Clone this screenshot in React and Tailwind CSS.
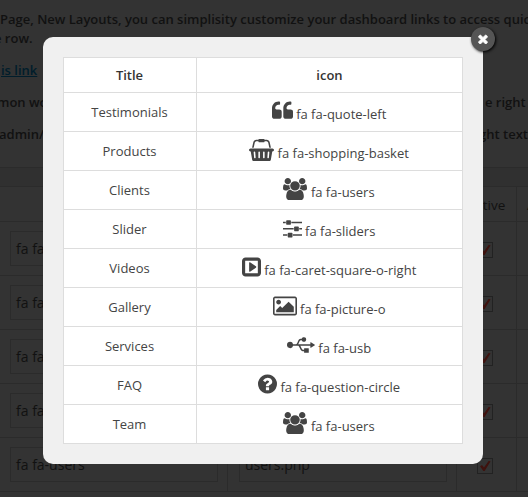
import React from "react";

const ICONS = {
  "quote-left": {
    box: "64 0 1664 1792",
    size: "w-[21px]",
    d: "M832 960v384q0 80-56 136t-136 56h-384q-80 0-136-56t-56-136v-704q0-104 40.5-198.5t109.5-163.5 163.5-109.5 198.5-40.5h64q26 0 45 19t19 45v128q0 26-19 45t-45 19h-64q-106 0-181 75t-75 181v32q0 40 28 68t68 28h224q80 0 136 56t56 136zm896 0v384q0 80-56 136t-136 56h-384q-80 0-136-56t-56-136v-704q0-104 40.5-198.5t109.5-163.5 163.5-109.5 198.5-40.5h64q26 0 45 19t19 45v128q0 26-19 45t-45 19h-64q-106 0-181 75t-75 181v32q0 40 28 68t68 28h224q80 0 136 56t56 136z",
  },
  "shopping-basket": {
    box: "0 0 2048 1792",
    size: "w-[25px]",
    d: "M1920 768q53 0 90.5 37.5t37.5 90.5-37.5 90.5-90.5 37.5h-15l-115 662q-8 46-44 76t-82 30h-1280q-46 0-82-30t-44-76l-115-662h-15q-53 0-90.5-37.5t-37.5-90.5 37.5-90.5 90.5-37.5h1792zm-1435 800q26-2 43.5-22.5t15.5-46.5l-32-416q-2-26-22.5-43.5t-46.5-15.5-43.5 22.5-15.5 46.5l32 416q2 25 20.5 42t43.5 17h5zm411-64v-416q0-26-19-45t-45-19-45 19-19 45v416q0 26 19 45t45 19 45-19 19-45zm384 0v-416q0-26-19-45t-45-19-45 19-19 45v416q0 26 19 45t45 19 45-19 19-45zm352 5l32-416q2-26-15.5-46.5t-43.5-22.5-46.5 15.5-22.5 43.5l-32 416q-2 26 15.5 46.5t43.5 22.5h5q25 0 43.5-17t20.5-42zm-1156-1217l-93 412h-132l101-441q19-88 89-143.5t160-55.5h167q0-26 19-45t45-19h384q26 0 45 19t19 45h167q90 0 160 55.5t89 143.5l101 441h-132l-93-412q-11-44-45.5-72t-79.5-28h-167q0 26-19 45t-45 19h-384q-26 0-45-19t-19-45h-167q-45 0-79.5 28t-45.5 72z",
  },
  users: {
    box: "64 0 1920 1792",
    size: "w-[24px]",
    d: "M657 896q-162 5-265 128h-134q-82 0-138-40.5t-56-118.5q0-353 124-353 6 0 43.5 21t97.5 42.5 119 21.5q67 0 133-23-5 37-5 66 0 139 81 256zm1071 637q0 120-73 189.5t-194 69.5h-874q-121 0-194-69.5t-73-189.5q0-53 3.5-103.5t14-109 26.5-108.5 43-97.5 62-81 85.5-53.5 111.5-20q10 0 43 21.5t73 48 107 48 135 21.5 135-21.5 107-48 73-48 43-21.5q61 0 111.5 20t85.5 53.5 62 81 43 97.5 26.5 108.5 14 109 3.5 103.5zm-1024-1277q0 106-75 181t-181 75-181-75-75-181 75-181 181-75 181 75 75 181zm704 384q0 159-112.5 271.5t-271.5 112.5-271.5-112.5-112.5-271.5 112.5-271.5 271.5-112.5 271.5 112.5 112.5 271.5zm576 225q0 78-56 118.5t-138 40.5h-134q-103-123-265-128 81-117 81-256 0-29-5-66 66 23 133 23 59 0 119-21.5t97.5-42.5 43.5-21q124 0 124 353zm-128-609q0 106-75 181t-181 75-181-75-75-181 75-181 181-75 181 75 75 181z",
  },
  sliders: {
    box: "128 0 1536 1792",
    size: "w-[19px]",
    d: "M480 1408v128h-352v-128h352zm352-128q26 0 45 19t19 45v256q0 26-19 45t-45 19h-256q-26 0-45-19t-19-45v-256q0-26 19-45t45-19h256zm160-384v128h-864v-128h864zm-640-512v128h-224v-128h224zm1312 1024v128h-736v-128h736zm-960-1152q26 0 45 19t19 45v256q0 26-19 45t-45 19h-256q-26 0-45-19t-19-45v-256q0-26 19-45t45-19h256zm640 512q26 0 45 19t19 45v256q0 26-19 45t-45 19h-256q-26 0-45-19t-19-45v-256q0-26 19-45t45-19h256zm320 128v128h-224v-128h224zm0-512v128h-864v-128h864z",
  },
  "caret-square-o-right": {
    box: "128 0 1536 1792",
    size: "w-[19px]",
    d: "M1280 896q0 33-27 52l-448 320q-31 23-66 5-35-17-35-57v-640q0-40 35-57 35-18 66 5l448 320q27 19 27 52zm128 480v-960q0-14-9-23t-23-9h-960q-14 0-23 9t-9 23v960q0 14 9 23t23 9h960q14 0 23-9t9-23zm256-960v960q0 119-84.5 203.5t-203.5 84.5h-960q-119 0-203.5-84.5t-84.5-203.5v-960q0-119 84.5-203.5t203.5-84.5h960q119 0 203.5 84.5t84.5 203.5z",
  },
  "picture-o": {
    box: "64 0 1920 1792",
    size: "w-[24px]",
    d: "M704 576q0 80-56 136t-136 56-136-56-56-136 56-136 136-56 136 56 56 136zm1024 384v448h-1408v-192l320-320 160 160 512-512zm96-704h-1600q-13 0-22.5 9.5t-9.5 22.5v1216q0 13 9.5 22.5t22.5 9.5h1600q13 0 22.5-9.5t9.5-22.5v-1216q0-13-9.5-22.5t-22.5-9.5zm160 32v1216q0 66-47 113t-113 47h-1600q-66 0-113-47t-47-113v-1216q0-66 47-113t113-47h1600q66 0 113 47t47 113z",
  },
  usb: {
    box: "0 0 2304 1792",
    size: "w-[28px]",
    d: "M256 640a256 256 0 0 1 248 192h242c55-20 95-110 140-210 60-130 120-238 244-238h77a192 192 0 1 1 0 128h-77c-55 0-95 80-140 180-25 55-45 102-70 140h1000v-128q0-18 16-28 16-8 32 1l320 192q16 9 16 27t-16 28l-320 192q-16 9-32 0-16-9-16-28v-128H1090c30 38 52 88 76 140 46 100 86 180 140 180h102v-96q0-32 32-32h320q32 0 32 32v320q0 32-32 32h-320q-32 0-32-32v-96h-102c-124 0-184-108-244-238-45-100-85-190-140-210H504A256 256 0 1 1 256 640z",
  },
  "question-circle": {
    box: "128 0 1536 1792",
    size: "w-[19px]",
    d: "M1024 1376v-192q0-14-9-23t-23-9h-192q-14 0-23 9t-9 23v192q0 14 9 23t23 9h192q14 0 23-9t9-23zm256-672q0-88-55.5-163t-138.5-116-170-41q-243 0-371 213-15 24 8 42l132 100q7 6 19 6 16 0 25-12 53-68 86-92 34-24 86-24 48 0 85.5 26t37.5 59q0 38-20 61t-68 45q-63 28-115.5 86.5t-52.5 125.5v36q0 14 9 23t23 9h192q14 0 23-9t9-23q0-19 21.5-49.5t54.5-49.5q32-18 49-28.5t46-35 44.5-48 28-60.5 12.5-81zm384 192q0 209-103 385.5t-279.5 279.5-385.5 103-385.5-103-279.5-279.5-103-385.5 103-385.5 279.5-279.5 385.5-103 385.5 103 279.5 279.5 103 385.5z",
  },
};

const ROWS = [
  ["Testimonials", "quote-left"],
  ["Products", "shopping-basket"],
  ["Clients", "users"],
  ["Slider", "sliders"],
  ["Videos", "caret-square-o-right"],
  ["Gallery", "picture-o"],
  ["Services", "usb"],
  ["FAQ", "question-circle"],
  ["Team", "users"],
];

function Icon({ name }) {
  const icon = ICONS[name];
  return (
    <svg viewBox={icon.box} className={`h-[22px] shrink-0 ${icon.size}`} fill="#444" preserveAspectRatio="none">
      <path d={icon.d} />
    </svg>
  );
}

function Check() {
  return (
    <div className="flex size-4 items-center justify-center border border-[#222]">
      <svg viewBox="0 0 12 12" className="size-3" fill="#3f120e">
        <path d="M1 6.2 3 5l2 2.6L9.6 1 11.6 1.2 5.6 11H4.4z" />
      </svg>
    </div>
  );
}

function Page() {
  return (
    <div className="h-[497px] overflow-hidden bg-[#333] text-[13px] text-[#111]">
      <div className="h-[167px] pt-[10px] font-semibold leading-[19px] whitespace-nowrap">
        <p>Page, New Layouts, you can simplisity customize your dashboard links to access quic</p>
        <p className="-ml-[6px]">e row.</p>
        <p className="mt-[13px] pl-px text-[#001d2b] underline">is link</p>
        <p className="mt-[13px] -ml-[3px] flex">
          <span className="w-[488px]">mon wo</span>
          <span>e right</span>
        </p>
        <p className="mt-[13px] -ml-px flex">
          <span className="w-[482px]">admin/</span>
          <span>ght text</span>
        </p>
      </div>
      <div className="h-5 border-y border-[#2b2b2b] bg-[#303030]" />
      <div className="grid h-[35px] w-[576px] grid-cols-[228px_229px_60px_59px] border-b border-[#2b2b2b] text-[13.5px]">
        <div className="border-r border-[#2b2b2b]" />
        <div className="border-r border-[#2b2b2b]" />
        <div className="flex items-center justify-center border-r border-[#2b2b2b] pt-0.5">Active</div>
        <div className="flex items-center pt-0.5 pl-[10px]">A</div>
      </div>
      {[0, 1, 2, 3, 4].map((i) => (
        <div key={i} className="grid h-[54px] w-[576px] grid-cols-[228px_229px_60px_59px] border-b border-[#2b2b2b] text-[14px]">
          <div className="border-r border-[#2b2b2b] pt-[9px] pl-[10px]">
            <div className="flex h-[35px] w-[208px] items-center border border-[#2b2b2b] pl-[5px]">fa fa-users</div>
          </div>
          <div className="border-r border-[#2b2b2b] pt-[9px] pl-[11px]">
            <div className="flex h-[35px] w-[208px] items-center border border-[#2b2b2b] pl-[5px]">users.php</div>
          </div>
          <div className="border-r border-[#2b2b2b] pt-[20px] pl-[20px]">
            <Check />
          </div>
          <div />
        </div>
      ))}
    </div>
  );
}

function Modal() {
  return (
    <div className="absolute top-[37px] left-[43px] w-[440px] rounded-[10px] bg-[#f0f0f0] p-5 text-[13px] text-[#444]">
      <div className="border border-[#ddd] bg-white">
        <div className="grid h-[35px] grid-cols-[133px_1fr] border-b border-[#ddd] text-center leading-[35px] font-semibold text-[#333]">
          <div className="border-r border-[#ddd] pr-px">Title</div>
          <div>icon</div>
        </div>
        {ROWS.map(([title, icon], i) => (
          <div
            key={title}
            className={`grid grid-cols-[133px_1fr] border-[#ddd] ${i < ROWS.length - 1 ? "h-[39px] border-b" : "h-[38px]"}`}
          >
            <div className="border-r border-[#ddd] pr-px text-center leading-[38px]">{title}</div>
            <div className="flex items-start justify-center gap-[3.5px] pt-[7px] pr-px">
              <Icon name={icon} />
              <span className="leading-[28px] whitespace-nowrap">fa fa-{icon}</span>
            </div>
          </div>
        ))}
      </div>
      <button
        aria-label="Close"
        className="absolute -top-[10px] -right-[12px] flex size-6 items-center justify-center rounded-full bg-[#555] shadow-[1px_1px_3px_#000]"
      >
        <svg viewBox="302 238 1188 1316" className="h-[10px] w-[10px]" fill="#fff" stroke="#fff" strokeWidth="90">
          <path d="M1490 1322q0 40-28 68l-136 136q-28 28-68 28t-68-28l-294-294-294 294q-28 28-68 28t-68-28l-136-136q-28-28-28-68t28-68l294-294-294-294q-28-28-28-68t28-68l136-136q28-28 68-28t68 28l294 294 294-294q28-28 68-28t68 28l136 136q28 28 28 68t-28 68l-294 294 294 294q28 28 28 68z" />
        </svg>
      </button>
    </div>
  );
}

export default function App() {
  return (
    <div className="relative h-[497px] w-[528px] overflow-hidden font-['Open_Sans',sans-serif]">
      <Page />
      <Modal />
    </div>
  );
}
